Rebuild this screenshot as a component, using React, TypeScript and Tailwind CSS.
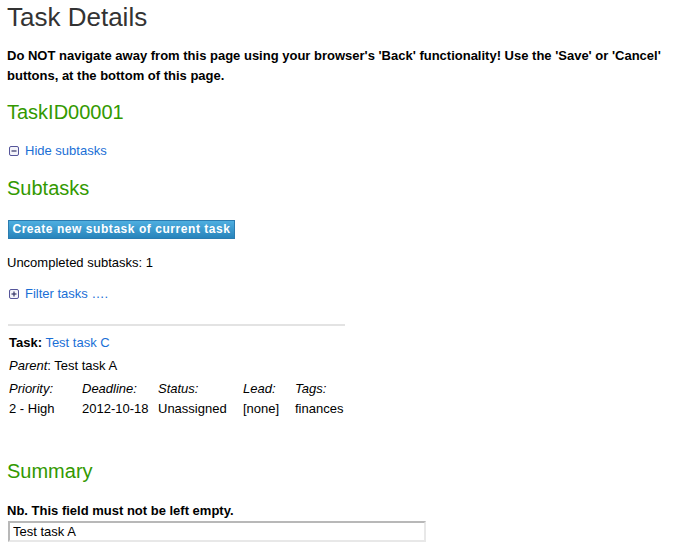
import React from "react"

function ToggleIcon({ plus }: { plus?: boolean }) {
  return (
    <svg width="10" height="10" viewBox="0 0 10 10" className="mr-[6px] shrink-0">
      <rect x="0.5" y="0.5" width="9" height="9" rx="1.5" fill="#f4f4fa" stroke="#55559a" />
      <line x1="2.5" y1="5" x2="7.5" y2="5" stroke="#333366" strokeWidth="1.2" />
      {plus && <line x1="5" y1="2.5" x2="5" y2="7.5" stroke="#333366" strokeWidth="1.2" />}
    </svg>
  )
}

export default function App() {
  return (
    <div className="w-[686px] h-[550px] overflow-hidden bg-white px-[7px] text-[13px] text-black font-['Liberation_Sans',Arial,sans-serif]">
      <h1 className="pt-[3px] text-[26px] leading-[28px] text-[#333333]">Task Details</h1>

      <p className="mt-[15px] font-bold leading-[20px]">
        Do NOT navigate away from this page using your browser's 'Back' functionality! Use the 'Save' or 'Cancel'
        buttons, at the bottom of this page.
      </p>

      <h2 className="mt-[14px] text-[20px] leading-[24px] text-[#339900]">TaskID00001</h2>

      <div className="mt-[19px] flex items-center pl-[2px]">
        <ToggleIcon />
        <a className="text-[#1a6fd6] leading-[16px]">Hide subtasks</a>
      </div>

      <h2 className="mt-[17px] text-[20px] leading-[24px] text-[#339900]">Subtasks</h2>

      <button className="mt-[20px] ml-[1px] h-[19px] w-[227px] border border-[#2b7cb0] bg-gradient-to-b from-[#4eaee0] to-[#2784bb] text-[12px] font-bold leading-[17px] tracking-[0.55px] text-white">
        Create new subtask of current task
      </button>

      <p className="mt-[16px] leading-[16px]">Uncompleted subtasks: 1</p>

      <div className="mt-[15px] flex items-center pl-[2px]">
        <ToggleIcon plus />
        <a className="text-[#1a6fd6] leading-[16px]">Filter tasks ….</a>
      </div>

      <div className="mt-[22px] ml-[1px] w-[337px] border-t-2 border-[#e3e3e3] pl-[1px]">
        <p className="mt-[9px] leading-[16px]">
          <b>Task:</b> <a className="text-[#1a6fd6]">Test task C</a>
        </p>
        <p className="mt-[7px] leading-[16px]">
          <i>Parent</i>: Test task A
        </p>
        <div className="mt-[5px] grid grid-cols-[73px_76px_85px_52px_1fr] leading-[20px]">
          <i>Priority:</i>
          <i>Deadline:</i>
          <i>Status:</i>
          <i>Lead:</i>
          <i>Tags:</i>
          <span>2 - High</span>
          <span>2012-10-18</span>
          <span>Unassigned</span>
          <span>[none]</span>
          <span>finances</span>
        </div>
      </div>

      <h2 className="mt-[40px] text-[20px] leading-[24px] text-[#339900]">Summary</h2>

      <p className="mt-[20px] font-bold leading-[16px]">Nb. This field must not be left empty.</p>
      <input
        readOnly
        value="Test task A"
        className="mt-[2px] ml-[1px] block h-[21px] w-[418px] border-2 border-t-[#b8b8b8] border-l-[#b8b8b8] border-r-[#e8e8e8] border-b-[#e8e8e8] px-[3px] text-[13px] leading-[16px] text-black outline-none"
      />
    </div>
  )
}
